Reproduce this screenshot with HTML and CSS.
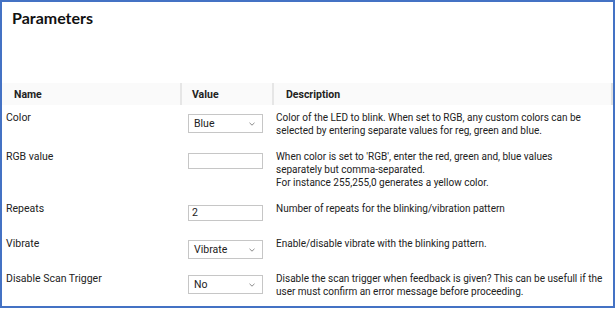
FILE: index.html
```html
<!DOCTYPE html>
<html lang="en">
<head>
    <meta charset="UTF-8">
    <title>Parameters</title>
    <link rel="stylesheet" href="styles.css">
</head>
<body>
    <div class="frame">
        <h1 class="title">Parameters</h1>

        <div class="table">
            <div class="row head">
                <div class="cell">Name</div>
                <div class="cell">Value</div>
                <div class="cell">Description</div>
            </div>

            <div class="row">
                <div class="cell name">Color</div>
                <div class="cell value">
                    <div class="select"><span>Blue</span><svg width="6" height="4" viewBox="0 0 6 4"><path d="M0.5 0.8 L3 3.2 L5.5 0.8" fill="none" stroke="#8a8a8a" stroke-width="1"/></svg></div>
                </div>
                <div class="cell desc">Color of the LED to blink. When set to RGB, any custom colors can be<br>selected by entering separate values for reg, green and blue.</div>
            </div>

            <div class="row">
                <div class="cell name">RGB value</div>
                <div class="cell value"><div class="input"></div></div>
                <div class="cell desc">When color is set to 'RGB', enter the red, green and, blue values<br>separately but comma-separated.<br>For instance 255,255,0 generates a yellow color.</div>
            </div>

            <div class="row">
                <div class="cell name">Repeats</div>
                <div class="cell value"><div class="input">2</div></div>
                <div class="cell desc">Number of repeats for the blinking/vibration pattern</div>
            </div>

            <div class="row">
                <div class="cell name">Vibrate</div>
                <div class="cell value">
                    <div class="select"><span>Vibrate</span><svg width="6" height="4" viewBox="0 0 6 4"><path d="M0.5 0.8 L3 3.2 L5.5 0.8" fill="none" stroke="#8a8a8a" stroke-width="1"/></svg></div>
                </div>
                <div class="cell desc">Enable/disable vibrate with the blinking pattern.</div>
            </div>

            <div class="row">
                <div class="cell name">Disable Scan Trigger</div>
                <div class="cell value">
                    <div class="select"><span>No</span><svg width="6" height="4" viewBox="0 0 6 4"><path d="M0.5 0.8 L3 3.2 L5.5 0.8" fill="none" stroke="#8a8a8a" stroke-width="1"/></svg></div>
                </div>
                <div class="cell desc">Disable the scan trigger when feedback is given? This can be usefull if the<br>user must confirm an error message before proceeding.</div>
            </div>
        </div>
    </div>
</body>
</html>
```

FILE: styles.css
```css
* {
    margin: 0;
    padding: 0;
    box-sizing: border-box;
}

body {
    font-family: Roboto, "Liberation Sans", sans-serif;
    color: #222;
    background: #fff;
}

.frame {
    width: 615px;
    height: 308px;
    border: 2px solid #4472c4;
    overflow: hidden;
}

.title {
    font-family: Lato, sans-serif;
    font-size: 16px;
    font-weight: 700;
    line-height: 23px;
    padding: 4px 0 0 10px;
    height: 81px;
    color: #111;
}

.table {
    width: 611px;
}

.row {
    display: grid;
    grid-template-columns: 178px 92px 1fr;
    padding: 6px 0 7px;
    font-size: 10px;
    line-height: 13px;
}

.row.head {
    background: #fafafa;
    padding: 0;
    height: 22px;
    font-size: 10.5px;
    font-weight: 700;
    border-right: 2px solid #e2e2e2;
}

.row.head .cell {
    display: flex;
    align-items: center;
    padding-left: 12px;
}

.row.head .cell + .cell {
    border-left: 2px solid #e6e6e6;
    padding-left: 10px;
}

.row.head .cell:last-child {
    padding-left: 12px;
}

.name {
    padding-left: 4px;
    font-size: 10.5px;
}

.value {
    padding: 3px 0 0 8px;
    font-size: 10.5px;
}

.desc {
    padding-left: 4px;
    white-space: nowrap;
}

.select {
    width: 75px;
    height: 19px;
    border: 1px solid #c6c6c6;
    background: #fff;
    display: flex;
    align-items: center;
    justify-content: space-between;
    padding: 0 7px 0 5px;
}

.input {
    width: 75px;
    height: 16px;
    border: 1px solid #c6c6c6;
    background: #fff;
    padding-left: 3px;
    line-height: 14px;
    margin-bottom: 3px;
}
```
